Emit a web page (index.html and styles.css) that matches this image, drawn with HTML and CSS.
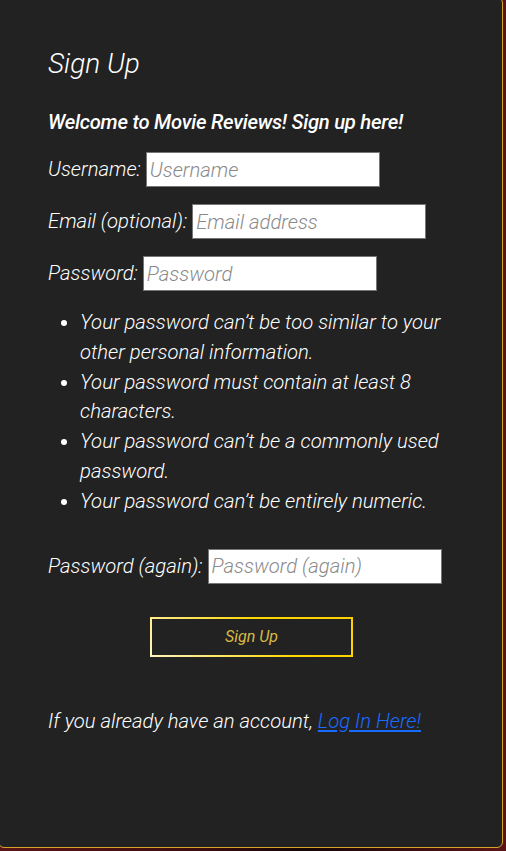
FILE: index.html
```html
<!DOCTYPE html>
<html lang="en">
<head>
<meta charset="utf-8">
<title>Sign Up</title>
<link rel="stylesheet" href="styles.css">
</head>
<body>
<main class="card">
  <h1 class="title">Sign Up</h1>
  <p class="welcome">Welcome to Movie Reviews! Sign up here!</p>
  <form class="form">
    <p class="row"><label for="u">Username:</label> <input id="u" type="text" placeholder="Username"></p>
    <p class="row"><label for="e">Email (optional):</label> <input id="e" type="email" placeholder="Email address"></p>
    <p class="row"><label for="p">Password:</label> <input id="p" type="password" placeholder="Password"></p>
    <ul class="help">
      <li>Your password can’t be too similar to your other personal information.</li>
      <li>Your password must contain at least 8 characters.</li>
      <li>Your password can’t be a commonly used password.</li>
      <li>Your password can’t be entirely numeric.</li>
    </ul>
    <p class="row"><label for="p2">Password (again):</label> <input id="p2" type="password" placeholder="Password (again)"></p>
    <div class="actions"><button type="button" class="btn">Sign Up</button></div>
  </form>
  <p class="login">If you already have an account, <a href="#">Log In Here!</a></p>
</main>
</body>
</html>
```

FILE: styles.css
```css
html, body {
  margin: 0;
  padding: 0;
}
body {
  width: 506px;
  height: 851px;
  overflow: hidden;
  background: linear-gradient(90deg, #5a1417 0%, #3a0c0f 40%, #140506 60%, #5a1417 100%);
  font-family: Roboto, "Liberation Sans", sans-serif;
  font-style: italic;
  font-weight: 300;
  color: #ffffff;
}
.card {
  box-sizing: border-box;
  width: 505px;
  height: 851px;
  margin: -3px 0 0 -2px;
  background: #222222;
  border: 1px solid #d4a52a;
  border-radius: 6px;
  padding: 48px 0 0 49px;
}
.title {
  margin: 0;
  font-size: 28px;
  font-weight: 300;
  line-height: 36px;
}
.welcome {
  margin: 28px 0 0;
  font-size: 20.25px;
  font-weight: 500;
  line-height: 24px;
  letter-spacing: -0.26px;
}
.form {
  margin: 0;
}
.row {
  margin: 0;
  font-size: 20.25px;
  line-height: 35px;
  display: flex;
  align-items: center;
  gap: 5px;
}
.welcome + .form .row:first-child {
  margin-top: 18px;
}
.row + .row {
  margin-top: 17px;
}
input {
  box-sizing: border-box;
  width: 234px;
  height: 35px;
  margin: 0;
  padding: 1px 3px;
  border: 1px solid #767676;
  background: #ffffff;
  font-family: Roboto, "Liberation Sans", sans-serif;
  font-style: italic;
  font-weight: 300;
  font-size: 20.25px;
  color: #222;
  border-radius: 0;
}
input::placeholder {
  color: #8a8a8a;
}
.help {
  margin: 17px 0 0;
  padding: 0 0 0 32px;
  width: 390px;
  font-size: 20.25px;
  line-height: 29.8px;
}
.help + .row {
  margin-top: 32px;
}
.actions {
  margin-top: 33px;
  padding-left: 102px;
}
.btn {
  box-sizing: border-box;
  width: 203px;
  height: 40px;
  background: transparent;
  border: 2px solid;
  border-image: linear-gradient(45deg, #fff4c0 0%, #ffd700 60%, #ffd000 100%) 1;
  color: #d9bb45;
  font-family: Roboto, "Liberation Sans", sans-serif;
  font-style: italic;
  font-weight: 400;
  font-size: 16px;
  cursor: pointer;
}
.login {
  margin: 51px 0 0;
  font-size: 20.25px;
  line-height: 26px;
}
.login a {
  color: #1a6bff;
  text-decoration: underline;
}
```
